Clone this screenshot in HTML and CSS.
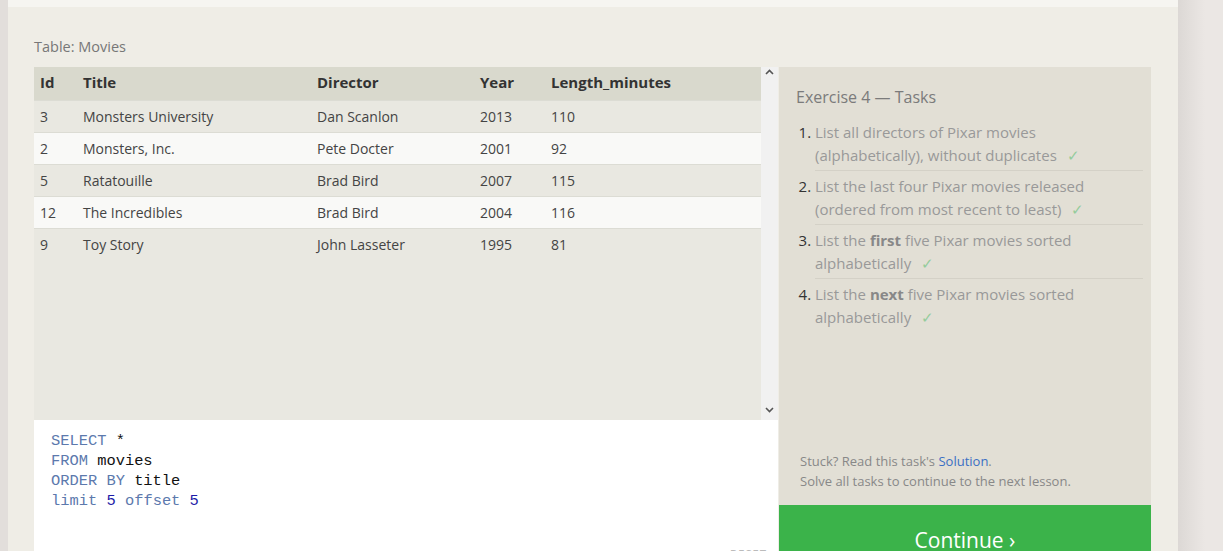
FILE: index.html
```html
<!DOCTYPE html>
<html>
<head>
<meta charset="utf-8">
<link rel="stylesheet" href="styles.css">
</head>
<body>
<div class="page">
  <div class="card-top"></div>
  <div class="lesson">
    <div class="table-label">Table: Movies</div>
    <div class="workspace">
      <div class="left">
        <div class="results">
          <div class="table-wrap">
            <table class="movies">
              <colgroup>
                <col class="c-id"><col class="c-title"><col class="c-dir"><col class="c-year"><col>
              </colgroup>
              <thead>
                <tr><th>Id</th><th>Title</th><th>Director</th><th>Year</th><th>Length_minutes</th></tr>
              </thead>
              <tbody>
                <tr><td>3</td><td>Monsters University</td><td>Dan Scanlon</td><td>2013</td><td>110</td></tr>
                <tr><td>2</td><td>Monsters, Inc.</td><td>Pete Docter</td><td>2001</td><td>92</td></tr>
                <tr><td>5</td><td>Ratatouille</td><td>Brad Bird</td><td>2007</td><td>115</td></tr>
                <tr><td>12</td><td>The Incredibles</td><td>Brad Bird</td><td>2004</td><td>116</td></tr>
                <tr><td>9</td><td>Toy Story</td><td>John Lasseter</td><td>1995</td><td>81</td></tr>
              </tbody>
            </table>
          </div>
          <div class="scrollbar">
            <svg class="chev" width="9" height="6" viewBox="0 0 9 6"><polyline points="1,5 4.5,1.5 8,5" fill="none" stroke="#555" stroke-width="1.6"/></svg>
            <svg class="chev" width="9" height="6" viewBox="0 0 9 6"><polyline points="1,1 4.5,4.5 8,1" fill="none" stroke="#555" stroke-width="1.6"/></svg>
          </div>
        </div>
        <div class="editor">
          <pre class="code"><span class="kw">SELECT</span> *
<span class="kw">FROM</span> movies
<span class="kw">ORDER BY</span> title
<span class="kw">limit</span> <span class="num">5</span> <span class="kw">offset</span> <span class="num">5</span></pre>
          <div class="reset">RESET</div>
        </div>
      </div>
      <div class="right">
        <div class="tasks">
          <h3 class="tasks-title">Exercise 4 — Tasks</h3>
          <ol class="task-list">
            <li><span class="t">List all directors of Pixar movies (alphabetically), without duplicates <span class="check">✓</span></span></li>
            <li><span class="t">List the last four Pixar movies released (ordered from most recent to least) <span class="check">✓</span></span></li>
            <li><span class="t">List the <b>first</b> five Pixar movies sorted alphabetically <span class="check">✓</span></span></li>
            <li class="last"><span class="t">List the <b>next</b> five Pixar movies sorted alphabetically <span class="check">✓</span></span></li>
          </ol>
          <div class="stuck">
            <div>Stuck? Read this task's <a class="sol">Solution</a>.</div>
            <div>Solve all tasks to continue to the next lesson.</div>
          </div>
        </div>
        <div class="continue">Continue ›</div>
      </div>
    </div>
  </div>
</div>
</body>
</html>
```

FILE: styles.css
```css
html, body {
  margin: 0;
  padding: 0;
  height: 100%;
  overflow: hidden;
}
body {
  background: linear-gradient(to right, #e2dedb 0, #e2dedb 1178px, #dcd8d5 1178px, #ebe7e4 1205px, #ebe7e4 100%);
  font-family: "Open Sans", "Noto Sans", sans-serif;
}
.page {
  width: 1170px;
  margin-left: 8px;
  height: 100%;
  display: flex;
  flex-direction: column;
}
.card-top {
  height: 7px;
  background: #f6f5f1;
  flex: none;
}
.lesson {
  flex: 1;
  background: #efede6;
  padding: 0 27px 0 26px;
}
.table-label {
  margin-top: 30px;
  margin-bottom: 10px;
  font-size: 14.5px;
  line-height: 20px;
  color: #777;
}
.workspace {
  display: flex;
}
.left {
  width: 744px;
  display: flex;
  flex-direction: column;
}
.results {
  height: 353px;
  background: #e9e8e1;
  display: flex;
}
.table-wrap {
  flex: 1;
}
.movies {
  width: 100%;
  border-collapse: collapse;
  table-layout: fixed;
  font-size: 14px;
  color: #444;
}
.c-id { width: 43px; }
.c-title { width: 234px; }
.c-dir { width: 163px; }
.c-year { width: 71px; }
.movies th {
  background: #d9d9cd;
  text-align: left;
  font-weight: 700;
  font-size: 15px;
  line-height: 20px;
  color: #333;
  height: 33px;
  padding: 0 0 2px 6px;
  box-sizing: border-box;
}
.movies td {
  height: 31px;
  padding: 0 0 0 6px;
  border-top: 1px solid #dcdcd4;
}
.movies tbody tr:nth-child(even) td {
  background: #f9f9f7;
}
.movies tbody tr:nth-child(odd) td {
  background: #e9e8e1;
}
.scrollbar {
  width: 17px;
  background: #f1f1f1;
  display: flex;
  flex-direction: column;
  justify-content: space-between;
  align-items: center;
  padding: 2px 0 7px;
  box-sizing: border-box;
}
.chev {
  display: block;
}
.editor {
  position: relative;
  background: #fff;
  height: 160px;
}
.code {
  margin: 0;
  padding: 11px 17px 10px;
  font-family: "Liberation Mono", "DejaVu Sans Mono", monospace;
  font-size: 15.4px;
  line-height: 20px;
  color: #111;
}
.kw { color: #5c79ad; }
.num { color: #1c1ca8; }
.reset {
  position: absolute;
  top: 126px;
  right: 11px;
  font-size: 11px;
  font-weight: 700;
  letter-spacing: 1px;
  color: #bbb;
}
.right {
  width: 372px;
  margin-left: 1px;
  display: flex;
  flex-direction: column;
}
.tasks {
  height: 438px;
  box-sizing: border-box;
  background: #e2dfd5;
  padding: 19px 8px 14px 17px;
  display: flex;
  flex-direction: column;
}
.tasks-title {
  margin: 0 0 9px;
  font-size: 16px;
  line-height: 22px;
  font-weight: 400;
  color: #7b7b7b;
}
.task-list {
  margin: 0;
  padding: 0 0 0 19px;
  font-size: 15px;
  line-height: 23px;
  color: #333;
}
.task-list li {
  padding: 4px 0 3px;
  border-bottom: 1px solid #d4d1c7;
}
.task-list li.last {
  border-bottom: none;
}
.task-list li::marker {
  color: #333;
}
.t {
  color: #999;
}
.t b {
  color: #888;
  font-weight: 700;
}
.check {
  color: #94cc9c;
  margin-left: 6px;
}
.stuck {
  margin-top: auto;
  font-size: 13px;
  line-height: 20px;
  color: #888;
  padding-left: 4px;
}
.sol {
  color: #3a6fc4;
}
.continue {
  background: #3bb34a;
  color: #fff;
  font-size: 21px;
  line-height: 28px;
  text-align: center;
  padding: 21px 0 21px;
}
```
